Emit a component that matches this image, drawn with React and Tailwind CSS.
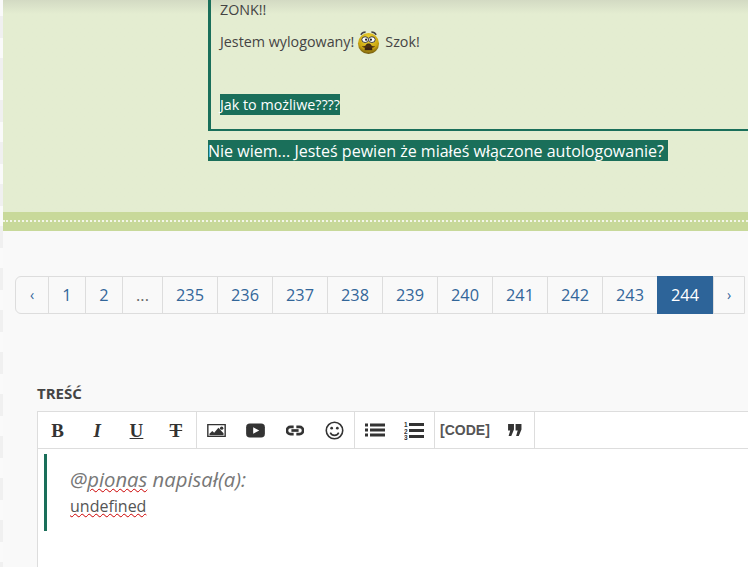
import React from "react";

const pages = ["‹", "1", "2", "...", "235", "236", "237", "238", "239", "240", "241", "242", "243", "244", "›"];

const ImageIcon = () => (
  <svg viewBox="0 0 20 16" className="w-[19px] h-[15px]">
    <path fill="#333" fillRule="evenodd" d="M0 1h20v14H0zM1.500 2.500v11h17v-11z" />
    <circle cx="15.500" cy="5.500" r="1.800" fill="#333" />
    <path fill="#333" d="M2.500 13v-1.500l3-3 2 2 4.500-5.500 5.500 6v2z" />
  </svg>
);

const VideoIcon = () => (
  <svg viewBox="0 0 20 16" className="w-[19px] h-[15px]">
    <rect y="0.500" width="20" height="15" rx="4" fill="#333" />
    <path fill="#fff" d="M7.500 4.500l6.500 3.500-6.500 3.500z" />
  </svg>
);

const LinkIcon = () => (
  <svg viewBox="0 0 20 12" className="w-[18px] h-[11px]" fill="none" stroke="#333" strokeWidth="3">
    <path d="M8.500 2H5a4 4 0 0 0 0 8h3.500" />
    <path d="M11.500 2H15a4 4 0 0 1 0 8h-3.500" />
    <path d="M6 6h8" />
  </svg>
);

const SmileIcon = () => (
  <svg viewBox="0 0 18 18" className="w-[19px] h-[19px]" fill="none" stroke="#333">
    <circle cx="9" cy="9" r="7.800" strokeWidth="1.500" />
    <circle cx="6.300" cy="6.800" r="1.300" fill="#333" stroke="none" />
    <circle cx="11.700" cy="6.800" r="1.300" fill="#333" stroke="none" />
    <path d="M5 11c1 2 2.500 2.600 4 2.600s3-.6 4-2.600" strokeWidth="1.500" />
  </svg>
);

const ListIcon = () => (
  <svg viewBox="0 0 20 14" className="w-[20px] h-[14px]" fill="#333">
    <rect x="0" y="0.500" width="3" height="3" />
    <rect x="0" y="5.500" width="3" height="3" />
    <rect x="0" y="10.500" width="3" height="3" />
    <rect x="5" y="0.500" width="15" height="3" />
    <rect x="5" y="5.500" width="15" height="3" />
    <rect x="5" y="10.500" width="15" height="3" />
  </svg>
);

const OrderedListIcon = () => (
  <svg viewBox="0 0 20 19" className="w-[20px] h-[19px]" fill="#333">
    <text x="0" y="6" fontSize="6.500" fontWeight="700" fontFamily="Liberation Sans">1</text>
    <text x="0" y="12.500" fontSize="6.500" fontWeight="700" fontFamily="Liberation Sans">2</text>
    <text x="0" y="19" fontSize="6.500" fontWeight="700" fontFamily="Liberation Sans">3</text>
    <rect x="5" y="2" width="15" height="3" />
    <rect x="5" y="8" width="15" height="3" />
    <rect x="5" y="14" width="15" height="3" />
  </svg>
);

const QuoteIcon = () => (
  <svg viewBox="0 0 14 11" className="w-[15px] h-[12px]" fill="#333">
    <path d="M1 0h5.500v5L4 11H1.500L3 6H1z" />
    <path d="M8 0h5.500v5L11 11H8.500L10 6H8z" />
  </svg>
);

const Face = () => (
  <svg viewBox="0 0 24 26" className="w-[23px] h-[25px] ml-[3px] mr-[5px] shrink-0">
    <defs>
      <radialGradient id="head" cx="50%" cy="30%" r="70%">
        <stop offset="0%" stopColor="#f4dd3a" />
        <stop offset="70%" stopColor="#c9a40f" />
        <stop offset="100%" stopColor="#6b5510" />
      </radialGradient>
    </defs>
    <path d="M4 5c1-2 3-3 5-3M20 5c-1-2-3-3-5-3" stroke="#444" strokeWidth="1.400" fill="none" />
    <circle cx="12" cy="14" r="11" fill="url(#head)" />
    <ellipse cx="8.500" cy="10" rx="3.500" ry="3" fill="#fff" stroke="#333" />
    <ellipse cx="15.500" cy="10" rx="3.500" ry="3" fill="#fff" stroke="#333" />
    <circle cx="9.500" cy="10" r="1.200" fill="#222" />
    <circle cx="14.500" cy="10" r="1.200" fill="#222" />
    <path d="M8 21c0-5 2-7 4-7s4 2 4 7z" fill="#3a2412" />
    <path d="M5 17c3 0 5-1 7-2.500 2 1.500 4 2.500 7 2.500-2 2-5 2-7 1-2 1-5 1-7-1z" fill="#4a3010" />
  </svg>
);

const ToolButton = ({ children }) => (
  <div className="w-[39.4px] h-full flex items-center justify-center text-[#333] shrink-0">{children}</div>
);

const Glyph = ({ className, children }) => (
  <span className={`font-['Liberation_Serif',serif] font-bold text-[19px] leading-none text-[#333] ${className}`}>{children}</span>
);

const App = () => {
  return (
    <div className="w-[748px] h-[567px] overflow-hidden flex bg-[#f9f9f9] font-['Open_Sans',sans-serif]">
      <div className="w-[3px] shrink-0 bg-[repeating-linear-gradient(180deg,#fafafa_0_16px,#f0f0f0_16px_38px,#fafafa_38px_42px)]" />
      <div className="w-[745px] shrink-0">
        {/* post area */}
        <div className="h-[212px] pl-[205px] bg-gradient-to-b from-[#d3dac3] to-[#e4edd1] to-[14px]">
          <div className="w-[600px] h-[131px] border-l-[3px] border-b-2 border-[#1a6f5a] pl-[9px] text-[14.3px] text-[#444]">
            <p className="pt-px leading-[18px]">ZONK!!</p>
            <p className="mt-[14px] leading-[18px] flex items-center h-[18px]">
              Jestem wylogowany!
              <Face />
              Szok!
            </p>
            <p className="mt-[45px] leading-[18px]">
              <span className="bg-[#1a6f5a] text-white py-px">Jak to możliwe????</span>
            </p>
          </div>
          <p className="mt-[9px] text-[16.05px] leading-[22px]">
            <span className="bg-[#1a6f5a] text-white inline-block h-[21px]">Nie wiem... Jesteś pewien że miałeś włączone autologowanie?&nbsp;</span>
          </p>
        </div>

        {/* dotted band */}
        <div className="h-[19px] bg-[#c8d99a] pt-2">
          <div className="border-t-2 border-dotted border-[#f3f6e8]" />
        </div>

        {/* pagination */}
        <div className="mt-[45px] ml-3 flex h-[38px] w-[730px] border border-[#ddd] rounded-l-md text-[16.3px] text-[#336699]">
          {pages.map((page) => (
            <div
              key={page}
              className={`flex items-center justify-center border-r border-[#ddd] last:border-r-0 shrink-0 ${
                page === "244"
                  ? "w-[57px] -ml-px bg-[#2d6499] text-white -my-px"
                  : page === "‹"
                  ? "w-[33px] text-sm"
                  : page === "›"
                  ? "w-[30px] text-sm"
                  : page === "1" || page === "2"
                  ? "w-[37px]"
                  : page === "..."
                  ? "w-[40px] text-[#666]"
                  : "w-[55px]"
              }`}
            >
              {page}
            </div>
          ))}
        </div>

        {/* editor */}
        <div className="mt-[70px] ml-[34px]">
          <div className="text-[15px] font-bold text-[#444] leading-[19px] mb-2">TREŚĆ</div>
          <div className="border-l border-t border-[#ddd] bg-white h-[200px]">
            <div className="h-[37px] flex border-b border-[#ddd] items-center">
              <div className="flex h-full border-r border-[#ddd]">
                <ToolButton><Glyph>B</Glyph></ToolButton>
                <ToolButton><Glyph className="italic">I</Glyph></ToolButton>
                <ToolButton><Glyph className="underline">U</Glyph></ToolButton>
                <ToolButton><Glyph className="line-through">T</Glyph></ToolButton>
              </div>
              <div className="flex h-full border-r border-[#ddd]">
                <ToolButton><ImageIcon /></ToolButton>
                <ToolButton><VideoIcon /></ToolButton>
                <ToolButton><LinkIcon /></ToolButton>
                <ToolButton><SmileIcon /></ToolButton>
              </div>
              <div className="flex h-full border-r border-[#ddd]">
                <ToolButton><ListIcon /></ToolButton>
                <ToolButton><OrderedListIcon /></ToolButton>
              </div>
              <div className="flex h-full border-r border-[#ddd] items-center">
                <div className="w-[60px] text-center text-sm font-bold text-[#555] font-['Liberation_Sans',sans-serif]">[CODE]</div>
                <ToolButton><QuoteIcon /></ToolButton>
              </div>
            </div>
            <div className="ml-[6px] mt-[5px] h-[77px] border-l-[3px] border-[#1a6f5a] pl-[23px] pt-[11px]">
              <p className="italic text-[20.3px] leading-[28px] text-[#777]">
                @<span className="underline decoration-wavy decoration-[#c00] decoration-1">pionas</span> napisał(a):
              </p>
              <p className="text-base leading-[26px] text-[#555]">
                <span className="underline decoration-wavy decoration-[#c00] decoration-1">undefined</span>
              </p>
            </div>
          </div>
        </div>
      </div>
    </div>
  );
};

export default App;
